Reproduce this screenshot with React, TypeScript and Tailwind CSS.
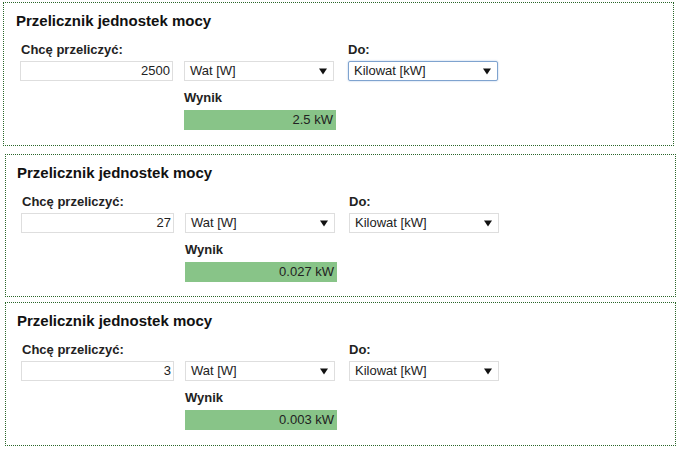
// App.tsx
// Three stacked power unit converter panels (W -> kW).

const PANELS = [
  { value: "2500", result: "2.5 kW", focused: true, box: "mt-[2px] ml-[3px] h-[144px] pl-[12px]" },
  { value: "27", result: "0.027 kW", focused: false, box: "mt-[8px] ml-[5px] h-[143px] pl-[11px]" },
  { value: "3", result: "0.003 kW", focused: false, box: "mt-[5px] ml-[5px] h-[144px] pl-[11px]" },
];

function Arrow() {
  return (
    <svg width="8" height="7" viewBox="0 0 8 7" className="shrink-0">
      <path d="M0 0.5 L8 0.5 L4 6.5 Z" fill="#111" />
    </svg>
  );
}

function FakeSelect({ label, focused }: { label: string; focused?: boolean }) {
  return (
    <div
      className={
        focused
          ? "flex h-[20px] w-[150px] items-center justify-between rounded-[2px] border border-[#7fa3cf] bg-white pl-[5px] pr-[6px] text-[13px] text-[#222] shadow-[0_0_2px_#a9c3e3]"
          : "flex h-[20px] w-[150px] items-center justify-between border border-[#dedede] bg-white pl-[5px] pr-[6px] text-[13px] text-[#222]"
      }
    >
      <span>{label}</span>
      <Arrow />
    </div>
  );
}

function Converter({ value, result, focused, box }: (typeof PANELS)[number]) {
  return (
    <div className={`${box} w-[671px] border border-dotted border-[#2a662a] bg-white pr-[12px] pt-[9px]`}>
      <h3 className="text-[15px] font-bold leading-[18px] text-[#111]">Przelicznik jednostek mocy</h3>

      <div className="ml-[4px] mt-[12px] flex">
        {/* input column */}
        <div className="flex w-[153px] flex-col">
          <label className="ml-[1px] text-[13px] font-bold leading-[16px] text-[#222]">Chcę przeliczyć:</label>
          <div className="mt-[3px] flex h-[20px] items-center justify-end border border-[#dedede] pr-[2px] text-[13px] text-[#222]">
            {value}
          </div>
        </div>

        {/* from unit + result */}
        <div className="ml-[11px] flex w-[152px] flex-col">
          <div className="h-[16px]" />
          <div className="mt-[3px]">
            <FakeSelect label="Wat [W]" />
          </div>
          <span className="mt-[9px] text-[13px] font-bold leading-[16px] text-[#222]">Wynik</span>
          <div className="mt-[4px] flex h-[20px] items-center justify-end bg-[#88c488] pr-[3px] text-[13px] text-[#222]">
            {result}
          </div>
        </div>

        {/* to unit */}
        <div className="ml-[12px] flex w-[151px] flex-col">
          <label className="text-[13px] font-bold leading-[16px] text-[#222]">Do:</label>
          <div className="mt-[3px]">
            <FakeSelect label="Kilowat [kW]" focused={focused} />
          </div>
        </div>
      </div>
    </div>
  );
}

export default function App() {
  return (
    <div className="h-[449px] w-[682px] overflow-hidden bg-white font-['Liberation_Sans',Arial,sans-serif]">
      {PANELS.map((p) => (
        <Converter key={p.value} {...p} />
      ))}
    </div>
  );
}
